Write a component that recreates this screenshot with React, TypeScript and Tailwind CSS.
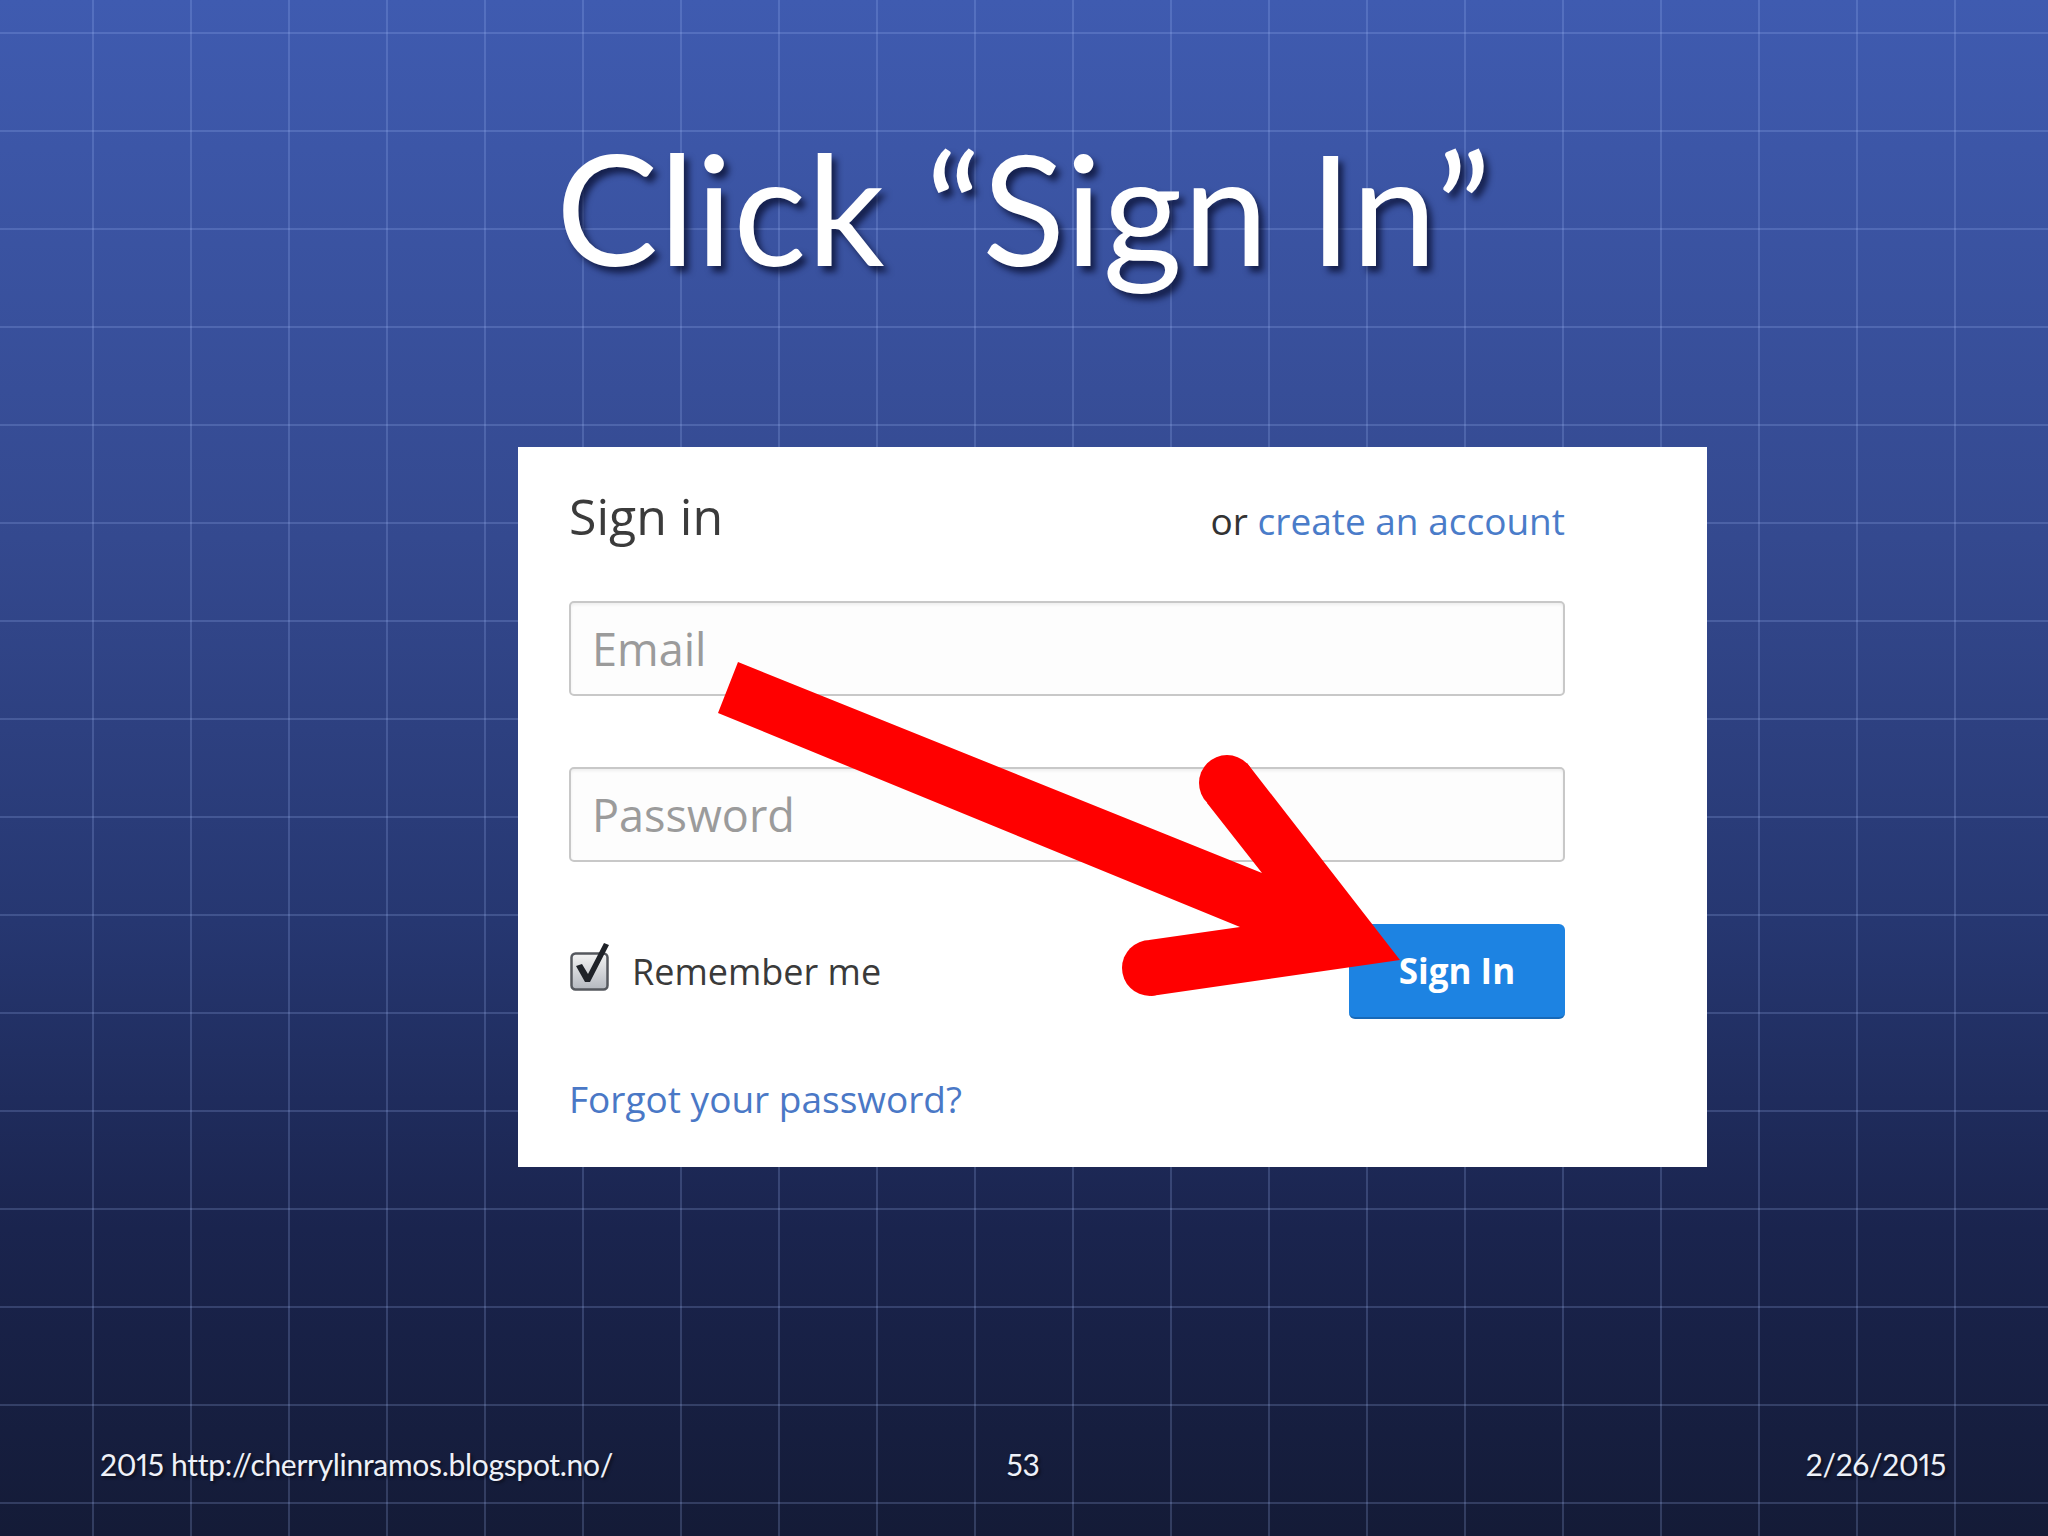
import React from "react";

function Checkbox() {
  return (
    <svg width="40" height="40" viewBox="0 0 40 40" className="overflow-visible shrink-0">
      <defs>
        <linearGradient id="cbg" x1="0" y1="0" x2="0" y2="1">
          <stop offset="0" stopColor="#f4f4f4" />
          <stop offset="1" stopColor="#b4b8bf" />
        </linearGradient>
      </defs>
      <rect x="1.5" y="1.5" width="36" height="36" rx="4" fill="url(#cbg)" stroke="#55585e" strokeWidth="2.5" />
      <path d="M6 14 L12 12 L18 22 L34 -9 L39 -7 L20 30 L15 30 Z" fill="#1f2228" />
    </svg>
  );
}

function Arrow() {
  return (
    <svg
      className="pointer-events-none absolute inset-0"
      width="2048"
      height="1536"
      viewBox="0 0 2048 1536"
    >
      <g fill="#ff0000">
        <polygon points="738,662 1262,873 1207,803 1247,763 1400,960 1151,996 1149,940 1240,927 718,713" />
        <circle cx="1227" cy="783" r="28" />
        <circle cx="1150" cy="968" r="28" />
      </g>
    </svg>
  );
}

export default function App() {
  return (
    <div
      className="relative w-[2048px] h-[1536px] overflow-hidden flex flex-col [background-image:linear-gradient(to_right,rgba(170,195,255,0.2)_2px,transparent_2px),linear-gradient(to_bottom,rgba(170,195,255,0.2)_2px,transparent_2px),linear-gradient(to_bottom,#3f5bb0_0%,#34498f_35%,#263771_60%,#1a244e_80%,#141b37_100%)] [background-size:98px_98px,98px_98px,100%_100%] [background-position:92px_0,0_32px,0_0]"
    >
      {/* Title */}
      <div className="mt-[131px] h-[152px] flex justify-center">
        <h1 className="font-['Lato',sans-serif] text-[153px] leading-none tracking-[0.005em] text-white [text-shadow:5px_6px_6px_rgba(5,10,40,0.7)]">
          Click “Sign In”
        </h1>
      </div>

      {/* Card */}
      <div className="mt-[164px] ml-[518px] w-[1189px] h-[720px] bg-white flex flex-col pl-[51px] pt-[44px] font-['Open_Sans',sans-serif]">
        <div className="w-[996px] flex items-baseline justify-between leading-none">
          <span className="text-[50px] text-[#3b3b3b]">Sign in</span>
          <span className="text-[37px] text-[#333]">
            or <span className="text-[#4a7cc9]">create an account</span>
          </span>
        </div>

        <div className="mt-[60px] w-[996px] h-[95px] rounded-[5px] border-2 border-[#c8c8c8] bg-[#fdfdfd] shadow-[inset_0_2px_3px_rgba(0,0,0,0.06)] flex items-center pl-[21px]">
          <span className="text-[45px] leading-none text-[#9b9b9b]">Email</span>
        </div>

        <div className="mt-[71px] w-[996px] h-[95px] rounded-[5px] border-2 border-[#c8c8c8] bg-[#fdfdfd] shadow-[inset_0_2px_3px_rgba(0,0,0,0.06)] flex items-center pl-[21px]">
          <span className="text-[45px] leading-none text-[#9b9b9b]">Password</span>
        </div>

        <div className="mt-[62px] w-[996px] h-[95px] flex items-center justify-between">
          <div className="flex items-center gap-[22px] pl-[1px]">
            <Checkbox />
            <span className="text-[36px] leading-none text-[#3a3a3a]">Remember me</span>
          </div>
          <button className="w-[216px] h-[95px] rounded-[6px] bg-[#1d83e2] border-b-2 border-[#1769b8] text-white font-bold text-[35px] leading-none flex items-center justify-center">
            Sign In
          </button>
        </div>

        <div className="mt-[61px] leading-none">
          <span className="text-[37px] text-[#4a78c6]">Forgot your password?</span>
        </div>
      </div>

      {/* Footer */}
      <div className="mt-[282px] h-[31px] grid grid-cols-3 pl-[100px] pr-[102px] font-['Lato',sans-serif] text-[30px] leading-none tracking-[-0.01em] [font-variant-numeric:proportional-nums] text-[#eef1f8] [text-shadow:2px_2px_3px_rgba(0,0,0,0.5)]">
        <div className="text-left">2015 http://cherrylinramos.blogspot.no/</div>
        <div className="text-center">53</div>
        <div className="text-right">2/26/2015</div>
      </div>

      <Arrow />
    </div>
  );
}
